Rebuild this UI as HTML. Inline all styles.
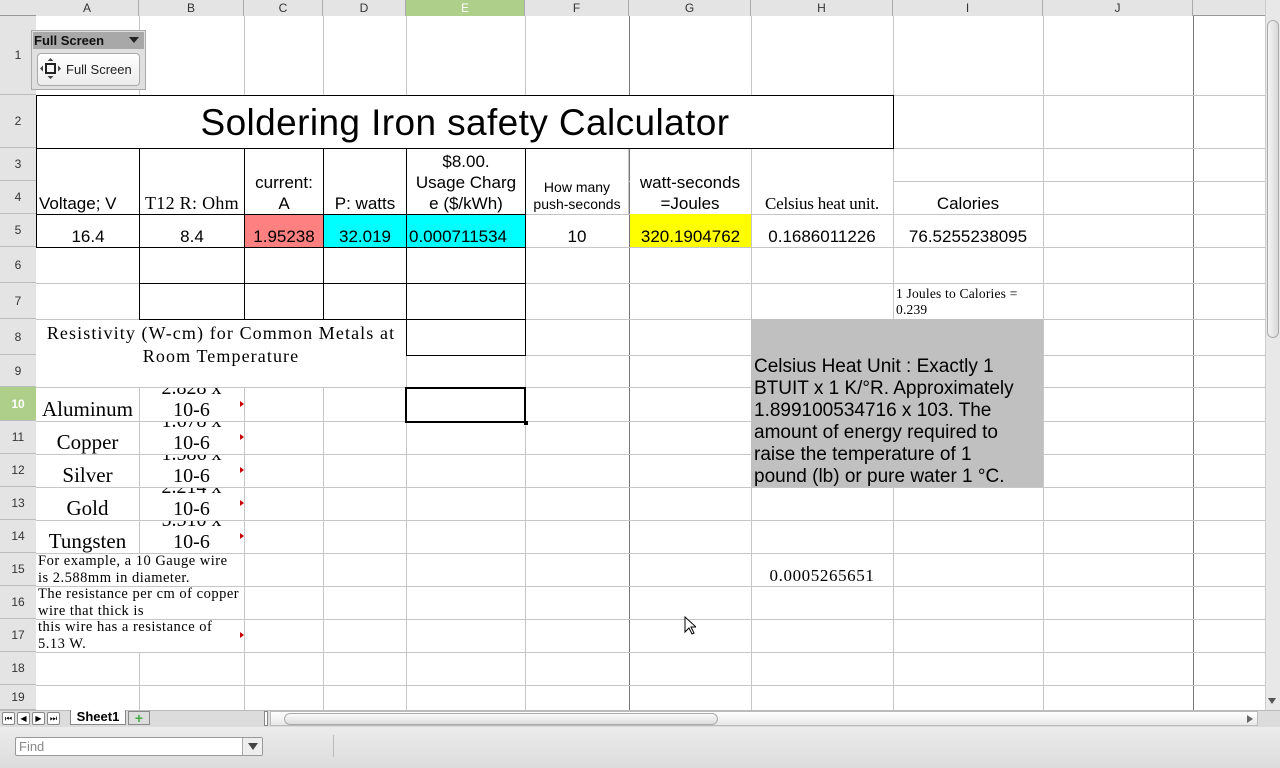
<!DOCTYPE html>
<html><head><meta charset="utf-8"><style>
*{margin:0;padding:0;box-sizing:border-box}
body{width:1280px;height:768px;overflow:hidden;background:#fff;font-family:"Liberation Sans",sans-serif;position:relative}
.a{position:absolute}
.v{position:absolute;top:16px;height:694px;width:1px;background:#c6c6c6}
.h{position:absolute;left:36px;width:1229px;height:1px;background:#c6c6c6}
.ch{position:absolute;top:0;height:16px;font-size:12px;color:#333;text-align:center;line-height:16px;border-right:1px solid #aaa;background:#e4e4e4}
.rh{position:absolute;left:0;width:36px;font-size:12px;color:#333;display:flex;align-items:center;justify-content:center;border-bottom:1px solid #bbb;background:#e4e4e4}
.c{position:absolute;display:flex;justify-content:center;align-items:flex-end;text-align:center;font-size:17px;line-height:21px;white-space:nowrap}
.s{font-family:"Liberation Serif",serif}
.w{background:#fff}
.bk{border:1px solid #000}
.r5{padding-top:11px}
.tri{position:absolute;width:0;height:0;border-top:3px solid transparent;border-bottom:3px solid transparent;border-left:4px solid #c00}
</style></head><body>
<div class="a" style="left:0;top:0;width:1265px;height:16px;background:#e4e4e4;border-bottom:1px solid #999"></div>
<div class="ch" style="left:36px;width:103px">A</div>
<div class="ch" style="left:139px;width:105px">B</div>
<div class="ch" style="left:244px;width:79px">C</div>
<div class="ch" style="left:323px;width:83px">D</div>
<div class="ch" style="left:406px;width:119px;background:#aecf8a;color:#fff">E</div>
<div class="ch" style="left:525px;width:104px">F</div>
<div class="ch" style="left:629px;width:122px">G</div>
<div class="ch" style="left:751px;width:142px">H</div>
<div class="ch" style="left:893px;width:150px">I</div>
<div class="ch" style="left:1043px;width:150px">J</div>
<div class="a" style="left:0;top:16px;width:36px;height:694px;background:#e4e4e4;border-right:1px solid #999"></div>
<div class="rh" style="top:16px;height:79px">1</div>
<div class="rh" style="top:95px;height:53px">2</div>
<div class="rh" style="top:148px;height:33px">3</div>
<div class="rh" style="top:181px;height:33px">4</div>
<div class="rh" style="top:214px;height:33px">5</div>
<div class="rh" style="top:247px;height:36px">6</div>
<div class="rh" style="top:283px;height:36px">7</div>
<div class="rh" style="top:319px;height:36px">8</div>
<div class="rh" style="top:355px;height:32px">9</div>
<div class="rh" style="top:387px;height:34px;background:#aecf8a;color:#fff;font-weight:bold">10</div>
<div class="rh" style="top:421px;height:33px">11</div>
<div class="rh" style="top:454px;height:33px">12</div>
<div class="rh" style="top:487px;height:33px">13</div>
<div class="rh" style="top:520px;height:33px">14</div>
<div class="rh" style="top:553px;height:33px">15</div>
<div class="rh" style="top:586px;height:33px">16</div>
<div class="rh" style="top:619px;height:33px">17</div>
<div class="rh" style="top:652px;height:33px">18</div>
<div class="rh" style="top:685px;height:25px">19</div>
<div class="v" style="left:139px"></div><div class="v" style="left:244px"></div><div class="v" style="left:323px"></div><div class="v" style="left:406px"></div><div class="v" style="left:525px"></div><div class="v" style="left:629px;background:#777"></div><div class="v" style="left:751px"></div><div class="v" style="left:893px"></div><div class="v" style="left:1043px"></div><div class="v" style="left:1193px;background:#777"></div>
<div class="h" style="top:95px"></div><div class="h" style="top:148px"></div><div class="h" style="top:181px"></div><div class="h" style="top:214px"></div><div class="h" style="top:247px"></div><div class="h" style="top:283px"></div><div class="h" style="top:319px"></div><div class="h" style="top:355px"></div><div class="h" style="top:387px"></div><div class="h" style="top:421px"></div><div class="h" style="top:454px"></div><div class="h" style="top:487px"></div><div class="h" style="top:520px"></div><div class="h" style="top:553px"></div><div class="h" style="top:586px"></div><div class="h" style="top:619px"></div><div class="h" style="top:652px"></div><div class="h" style="top:685px"></div>
<div class="c w bk" style="left:36px;top:95px;width:858px;height:54px;align-items:center;font-size:37px;line-height:40px;letter-spacing:0.4px;padding-top:2px">Soldering Iron safety Calculator</div>
<div class="c w" style="left:525px;top:149px;width:104px;height:65px;border-right:1px solid #c6c6c6"></div>
<div class="c w" style="left:630px;top:149px;width:121px;height:65px"></div>
<div class="c w" style="left:752px;top:149px;width:141px;height:65px"></div>
<div class="c w bk" style="left:36px;top:148px;width:104px;height:67px;justify-content:flex-start;padding-left:2px">Voltage; V</div>
<div class="c w bk s" style="left:139px;top:148px;width:106px;height:67px;font-size:18px;letter-spacing:0.3px">T12 R: Ohm</div>
<div class="c w bk" style="left:244px;top:148px;width:80px;height:67px">current:<br>A</div>
<div class="c w bk" style="left:323px;top:148px;width:84px;height:67px">P: watts</div>
<div class="c w bk" style="left:406px;top:148px;width:120px;height:67px">$8.00.<br>Usage Charg<br>e ($/kWh)</div>
<div class="c" style="left:525px;top:148px;width:104px;height:66px;font-size:14px;line-height:17px;padding-bottom:1px">How many<br>push-seconds</div>
<div class="c" style="left:629px;top:148px;width:122px;height:66px">watt-seconds<br>=Joules</div>
<div class="c s" style="left:751px;top:148px;width:142px;height:66px;font-size:17px;letter-spacing:-0.2px">Celsius heat unit.</div>
<div class="c" style="left:893px;top:148px;width:150px;height:66px">Calories</div>
<div class="c bk r5" style="left:36px;top:214px;width:104px;height:34px;align-items:center">16.4</div>
<div class="c bk r5" style="left:139px;top:214px;width:106px;height:34px;align-items:center">8.4</div>
<div class="c bk r5" style="left:244px;top:214px;width:80px;height:34px;align-items:center;background:#ff8080">1.95238</div>
<div class="c bk r5" style="left:323px;top:214px;width:84px;height:34px;align-items:center;background:#00ffff">32.019</div>
<div class="c bk r5" style="left:406px;top:214px;width:120px;height:34px;align-items:center;background:#00ffff;justify-content:flex-start;padding-left:2px">0.000711534</div>
<div class="c r5" style="left:525px;top:214px;width:104px;height:33px;align-items:center">10</div>
<div class="c r5" style="left:630px;top:214px;width:121px;height:33px;align-items:center;background:#ffff00">320.1904762</div>
<div class="c r5" style="left:751px;top:214px;width:142px;height:33px;align-items:center">0.1686011226</div>
<div class="c r5" style="left:893px;top:214px;width:150px;height:33px;align-items:center">76.5255238095</div>
<div class="a bk" style="left:139px;top:247px;width:106px;height:37px"></div>
<div class="a bk" style="left:244px;top:247px;width:80px;height:37px"></div>
<div class="a bk" style="left:323px;top:247px;width:84px;height:37px"></div>
<div class="a bk" style="left:406px;top:247px;width:120px;height:37px"></div>
<div class="a bk" style="left:139px;top:283px;width:106px;height:37px"></div>
<div class="a bk" style="left:244px;top:283px;width:80px;height:37px"></div>
<div class="a bk" style="left:323px;top:283px;width:84px;height:37px"></div>
<div class="a bk" style="left:406px;top:283px;width:120px;height:37px"></div>
<div class="a s" style="left:896px;top:286px;font-size:13.5px;line-height:16px;letter-spacing:0.2px">1 Joules to Calories =<br>0.239</div>
<div class="c w s" style="left:36px;top:320px;width:370px;height:67px;align-items:flex-start;white-space:normal;font-size:18px;line-height:23px;letter-spacing:1.1px;padding-top:2px">Resistivity (W-cm) for Common Metals at Room Temperature</div>
<div class="a bk" style="left:406px;top:319px;width:120px;height:37px"></div>
<div class="a" style="left:405px;top:387px;width:121px;height:36px;border:2px solid #000"></div>
<div class="a" style="left:524px;top:421px;width:4px;height:4px;background:#000"></div>
<div class="c s" style="left:36px;top:387px;width:103px;height:34px;align-items:center;font-size:21px;padding-top:10px">Aluminum</div>
<div class="c s" style="left:36px;top:421px;width:103px;height:33px;align-items:center;font-size:21px;padding-top:10px">Copper</div>
<div class="c s" style="left:36px;top:454px;width:103px;height:33px;align-items:center;font-size:21px;padding-top:10px">Silver</div>
<div class="c s" style="left:36px;top:487px;width:103px;height:33px;align-items:center;font-size:21px;padding-top:10px">Gold</div>
<div class="c s" style="left:36px;top:520px;width:103px;height:33px;align-items:center;font-size:21px;padding-top:10px">Tungsten</div>
<div class="c s" style="left:140px;top:388px;width:103px;height:33px;overflow:hidden;font-size:20px;line-height:22px">2.828 x<br>10-6</div>
<div class="c s" style="left:140px;top:422px;width:103px;height:32px;overflow:hidden;font-size:20px;line-height:22px">1.678 x<br>10-6</div>
<div class="c s" style="left:140px;top:455px;width:103px;height:32px;overflow:hidden;font-size:20px;line-height:22px">1.586 x<br>10-6</div>
<div class="c s" style="left:140px;top:488px;width:103px;height:32px;overflow:hidden;font-size:20px;line-height:22px">2.214 x<br>10-6</div>
<div class="c s" style="left:140px;top:521px;width:103px;height:32px;overflow:hidden;font-size:20px;line-height:22px">5.510 x<br>10-6</div>
<div class="a w" style="left:37px;top:554px;width:206px;height:32px"></div>
<div class="a w" style="left:37px;top:587px;width:206px;height:32px"></div>
<div class="a w" style="left:37px;top:620px;width:206px;height:32px"></div>
<div class="tri" style="left:240px;top:401px"></div><div class="tri" style="left:240px;top:434px"></div><div class="tri" style="left:240px;top:467px"></div><div class="tri" style="left:240px;top:500px"></div><div class="tri" style="left:240px;top:533px"></div><div class="tri" style="left:240px;top:632px"></div>
<div class="a s" style="left:38px;top:553px;font-size:14.5px;line-height:16.5px;width:205px;letter-spacing:0.5px;white-space:nowrap">For example, a 10 Gauge wire<br>is 2.588mm in diameter.</div>
<div class="a s" style="left:38px;top:586px;font-size:14.5px;line-height:16.5px;width:205px;letter-spacing:0.5px;white-space:nowrap">The resistance per cm of copper<br>wire that thick is</div>
<div class="a s" style="left:38px;top:619px;font-size:14.5px;line-height:16.5px;width:205px;letter-spacing:0.5px;white-space:nowrap">this wire has a resistance of<br>5.13 W.</div>
<div class="a" style="left:751px;top:319px;width:292px;height:168px;background:#c0c0c0"></div>
<div class="a" style="left:754px;top:356px;width:290px;font-size:19px;line-height:22px">Celsius Heat Unit : Exactly 1<br>BTUIT x 1 K/°R. Approximately<br>1.899100534716 x 103. The<br>amount of energy required to<br>raise the temperature of 1<br>pound (lb) or pure water 1 °C.</div>
<div class="c s" style="left:751px;top:553px;width:142px;height:33px;align-items:center;font-size:17px;letter-spacing:0.6px;padding-top:12px">0.0005265651</div>
<div class="a" style="left:31px;top:30px;width:115px;height:60px;background:#e0e0e0;border:1px solid #aaa"></div>
<div class="a" style="left:33px;top:32px;width:111px;height:17px;background:#a8a8a8;font-size:13px;font-weight:bold;line-height:17px;padding-left:1px;color:#111">Full Screen<span style="position:absolute;left:96px;top:5px;border-left:5px solid transparent;border-right:5px solid transparent;border-top:6px solid #222"></span></div>
<div class="a" style="left:37px;top:53px;width:103px;height:33px;background:linear-gradient(#fff,#ececec);border:1px solid #aaa;border-radius:4px;font-size:13px;line-height:31px;padding-left:28px;color:#222">Full Screen</div>
<svg class="a" style="left:40px;top:58px" width="22" height="22" viewBox="0 0 22 22"><rect x="6" y="6" width="9" height="9" fill="none" stroke="#222" stroke-width="2"/><path d="M10.5 0l3 3h-6zM10.5 21l3-3h-6zM0 10.5l3-3v6zM21 10.5l-3-3v6z" fill="#444"/></svg>
<div class="a" style="left:1265px;top:0;width:15px;height:710px;background:#e8e8e8;border-left:1px solid #ccc"></div>
<div class="a" style="left:1267px;top:20px;width:12px;height:318px;background:linear-gradient(90deg,#f4f4f4,#d8d8d8);border:1px solid #aaa;border-radius:6px"></div>
<div class="a" style="left:1268px;top:698px;border-left:4px solid transparent;border-right:4px solid transparent;border-top:6px solid #555"></div>
<div class="a" style="left:0;top:710px;width:1280px;height:17px;background:#dcdcdc;border-top:1px solid #bbb"></div>
<div class="a" style="left:2px;top:712px;width:60px;height:13px;font-size:8px;display:flex;gap:2px">
<span style="width:13px;height:13px;border:1px solid #888;border-radius:2px;background:#fff;text-align:center;line-height:11px">⏮</span><span style="width:13px;height:13px;border:1px solid #888;border-radius:2px;background:#fff;text-align:center;line-height:11px">◀</span><span style="width:13px;height:13px;border:1px solid #888;border-radius:2px;background:#fff;text-align:center;line-height:11px">▶</span><span style="width:13px;height:13px;border:1px solid #888;border-radius:2px;background:#fff;text-align:center;line-height:11px">⏭</span></div>
<div class="a" style="left:70px;top:710px;width:56px;height:15px;background:#fff;border:1px solid #888;border-top:none;font-size:13px;font-weight:bold;line-height:14px;text-align:center">Sheet1</div>
<div class="a" style="left:128px;top:711px;width:22px;height:14px;background:#ddd;border:1px solid #888;color:#4a4;font-weight:bold;font-size:14px;line-height:12px;text-align:center">+</div>
<div class="a" style="left:264px;top:711px;width:4px;height:15px;background:#fff;border:1px solid #888"></div>
<div class="a" style="left:270px;top:711px;width:988px;height:15px;background:linear-gradient(#fff,#e8e8e8);border:1px solid #bbb"></div>
<div class="a" style="left:284px;top:713px;width:434px;height:12px;background:linear-gradient(#fafafa,#ddd);border:1px solid #aaa;border-radius:6px"></div>
<div class="a" style="left:1247px;top:715px;border-top:4px solid transparent;border-bottom:4px solid transparent;border-left:6px solid #666"></div>
<div class="a" style="left:0;top:727px;width:1280px;height:41px;background:linear-gradient(#ececec,#dcdcdc)"></div>
<div class="a" style="left:15px;top:737px;width:248px;height:19px;background:#fff;border:1px solid #999;border-radius:2px;font-size:13px;color:#888;line-height:17px;padding-left:3px">Find</div>
<div class="a" style="left:242px;top:738px;width:20px;height:17px;background:#eee;border-left:1px solid #aaa"></div>
<div class="a" style="left:248px;top:743px;border-left:5px solid transparent;border-right:5px solid transparent;border-top:7px solid #444"></div>
<div class="a" style="left:333px;top:735px;width:1px;height:22px;background:#bbb"></div>
<svg class="a" style="left:684px;top:616px" width="12" height="20" viewBox="0 0 12 20"><path d="M1 1v15l4-4 3 6 2-1-3-6h5z" fill="#fff" stroke="#000"/></svg>
</body></html>
